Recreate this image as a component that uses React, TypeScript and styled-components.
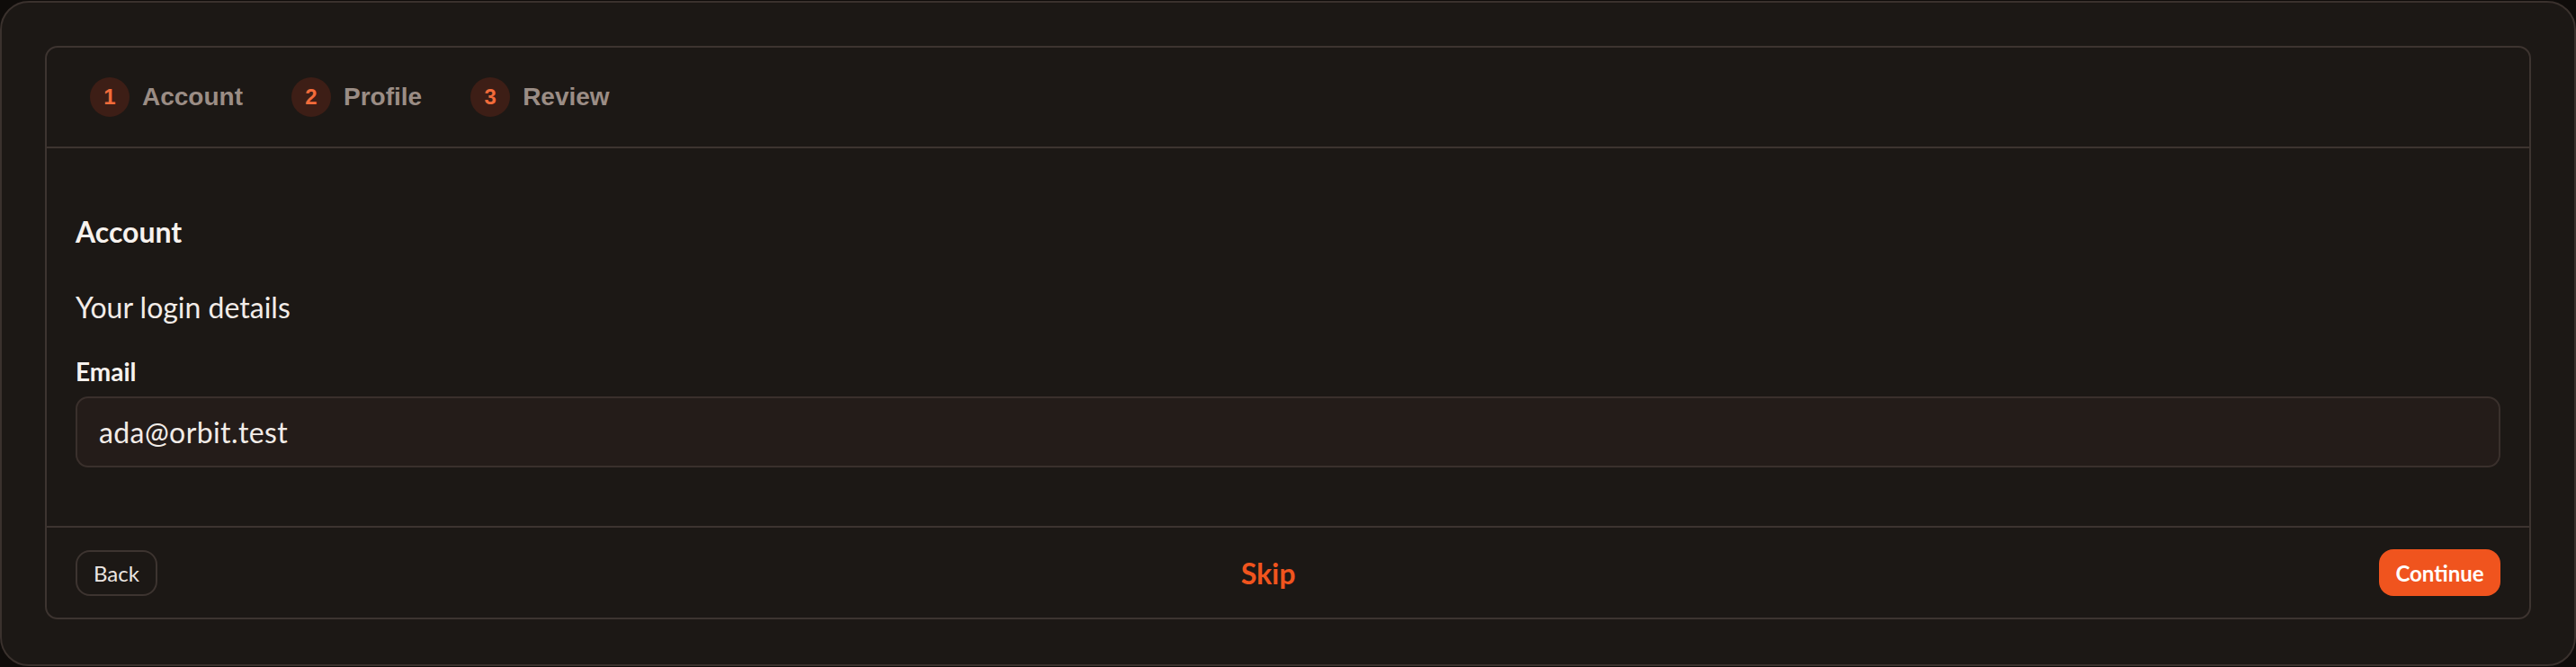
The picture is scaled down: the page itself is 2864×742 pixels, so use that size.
import React from "react";
import styled, { createGlobalStyle } from "styled-components";

const Global = createGlobalStyle`
  html, body {
    margin: 0;
    padding: 0;
    background: #0f0c0a;
  }
  * { box-sizing: border-box; }
`;

const sans = `"Lato", "Noto Sans", sans-serif`;

const Frame = styled.div`
  margin-top: 1px;
  width: 2864px;
  height: 740px;
  background: #1c1815;
  border: 2px solid #3a312d;
  border-radius: 32px;
  padding: 48px;
  font-family: ${sans};
`;

const Card = styled.div`
  height: 638px;
  border: 2px solid #3d3430;
  border-radius: 14px;
  display: flex;
  flex-direction: column;
`;

const Stepper = styled.ol`
  list-style: none;
  margin: 0;
  height: 112px;
  padding: 0 48px;
  border-bottom: 2px solid #3d3430;
  display: flex;
  align-items: center;
  gap: 54px;
`;

const Step = styled.li`
  display: flex;
  align-items: center;
  gap: 14px;
  font-family: "Liberation Sans", Arial, sans-serif;
  font-weight: 700;
`;

const StepNum = styled.span`
  width: 44px;
  height: 44px;
  border-radius: 50%;
  background: #3d1e16;
  color: #f26b3a;
  font-size: 24px;
  display: flex;
  align-items: center;
  justify-content: center;
`;

const StepLabel = styled.span`
  font-size: 28px;
  color: #9b8d85;
`;

const Body = styled.section`
  flex: 1;
  padding: 71px 32px 0;
  display: flex;
  flex-direction: column;
`;

const Title = styled.h2`
  margin: 0;
  font-size: 32px;
  line-height: 44px;
  font-weight: 700;
  color: #f7f2ee;
`;

const Subtitle = styled.p`
  margin: 40px 0 0;
  font-size: 32px;
  line-height: 44px;
  font-weight: 400;
  color: #f2ece8;
`;

const Label = styled.label`
  margin-top: 29px;
  font-size: 28px;
  line-height: 40px;
  font-weight: 700;
  color: #f7f2ee;
`;

const Input = styled.div`
  margin-top: 8px;
  height: 79px;
  border: 2px solid #3a302c;
  border-radius: 14px;
  background: #241c19;
  padding: 0 24px;
  display: flex;
  align-items: center;
  font-size: 32px;
  letter-spacing: 0.4px;
  color: #f2ece8;
`;

const Footer = styled.footer`
  height: 102px;
  border-top: 2px solid #3d3430;
  padding: 0 32px;
  display: flex;
  align-items: center;
  justify-content: space-between;
`;

const GhostButton = styled.button`
  height: 51px;
  width: 91px;
  padding: 0;
  border: 2px solid #3d3430;
  border-radius: 16px;
  background: transparent;
  color: #ece6e2;
  font-family: ${sans};
  font-size: 24px;
  font-weight: 400;
`;

const LinkButton = styled.button`
  border: none;
  background: transparent;
  padding: 0;
  color: #f0541e;
  font-family: ${sans};
  font-size: 32px;
  font-weight: 700;
`;

const PrimaryButton = styled.button`
  height: 52px;
  width: 135px;
  padding: 0;
  border: none;
  border-radius: 16px;
  background: #f0541e;
  color: #ffffff;
  font-family: ${sans};
  font-size: 24px;
  font-weight: 700;
`;

const steps = ["Account", "Profile", "Review"];

export default function App() {
  return (
    <>
      <Global />
      <Frame>
        <Card>
          <Stepper>
            {steps.map((s, i) => (
              <Step key={s}>
                <StepNum>{i + 1}</StepNum>
                <StepLabel>{s}</StepLabel>
              </Step>
            ))}
          </Stepper>
          <Body>
            <Title>Account</Title>
            <Subtitle>Your login details</Subtitle>
            <Label>Email</Label>
            <Input>ada@orbit.test</Input>
          </Body>
          <Footer>
            <GhostButton>Back</GhostButton>
            <LinkButton>Skip</LinkButton>
            <PrimaryButton>Continue</PrimaryButton>
          </Footer>
        </Card>
      </Frame>
    </>
  );
}
